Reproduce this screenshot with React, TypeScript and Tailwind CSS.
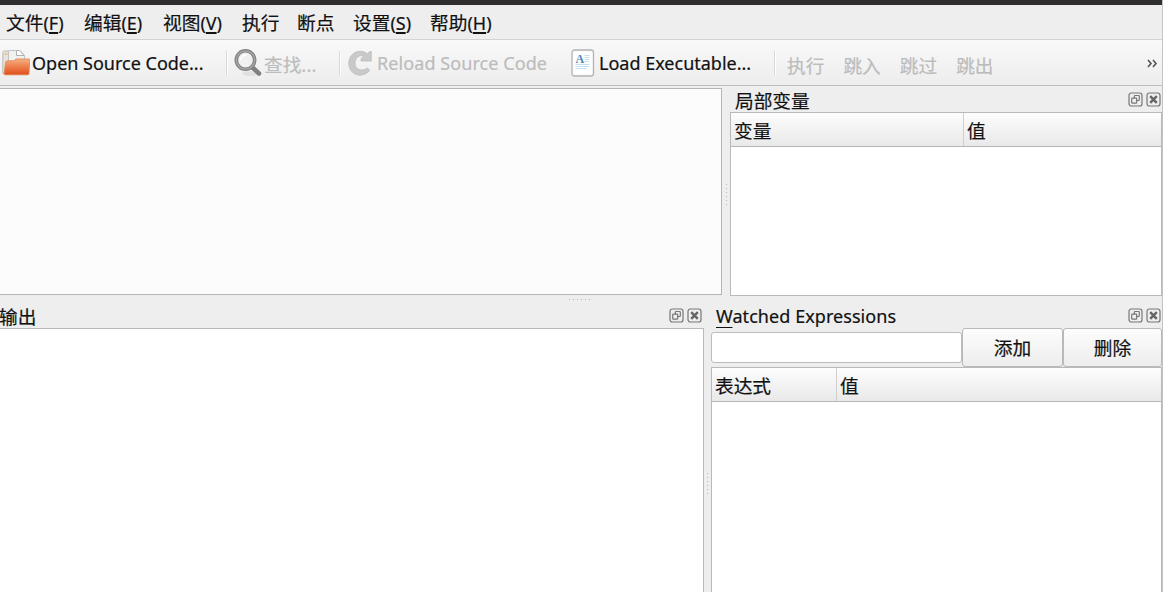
import React from 'react';

interface MenuEntry {
  label: string;
  shortcut?: string;
  width: string;
}

const menus: MenuEntry[] = [
  { label: '文件', shortcut: 'F', width: 'w-[78px]' },
  { label: '编辑', shortcut: 'E', width: 'w-[79px]' },
  { label: '视图', shortcut: 'V', width: 'w-[79px]' },
  { label: '执行', width: 'w-[55px]' },
  { label: '断点', width: 'w-[56px]' },
  { label: '设置', shortcut: 'S', width: 'w-[77px]' },
  { label: '帮助', shortcut: 'H', width: 'w-[78px]' },
];

const steps = ['执行', '跳入', '跳过', '跳出'];

const FolderIcon = () => (
  <svg width="28" height="28" viewBox="0 0 28 28" className="shrink-0">
    <defs>
      <linearGradient id="folder" x1="0" y1="0" x2="0" y2="1">
        <stop offset="0" stopColor="#f5b184" />
        <stop offset="0.45" stopColor="#ef8250" />
        <stop offset="1" stopColor="#e04d1c" />
      </linearGradient>
    </defs>
    <path d="M.8 24.500V3.500Q.8 2 2.300 2H6l1.500 2V24z" fill="#e6e3df" stroke="#bdbab6" />
    <path d="M6.500 1.500h11.500l4.500 5V16h-16z" fill="#f1f1f0" stroke="#c3c3c2" />
    <path d="M14.500 1.500V6.500h7.500L17.500 1.500z" fill="#fff" stroke="#b0b0b0" />
    <path d="M2.500 5h3" stroke="#e8a94f" />
    <path d="M3.500 14Q3.500 11.800 5.500 11.800h6.500l2-1.800h13q.8 0 .8 1l-.8 13.500q0 1.300-1.500 1.300H3q-1 0-.8-1.300z" fill="url(#folder)" stroke="#e0824f" strokeWidth="0.800" />
  </svg>
);

const FindIcon = () => (
  <svg width="30" height="30" viewBox="0 0 30 30" className="shrink-0">
    <ellipse cx="17" cy="25.500" rx="9" ry="2.300" fill="#e0e0e0" />
    <path d="M18.500 19.500l6.500 6" stroke="#808080" strokeWidth="4.500" strokeLinecap="round" />
    <circle cx="11.500" cy="12" r="9.200" fill="#f0f0f0" stroke="#828282" strokeWidth="3.600" />
    <circle cx="11.500" cy="12" r="9.200" fill="none" stroke="#aaa" strokeWidth="1.200" />
    <path d="M6.500 12q1-5 6-5" fill="none" stroke="#fff" strokeWidth="1.500" />
  </svg>
);

const ReloadIcon = () => (
  <svg width="26" height="28" viewBox="0 0 26 28" className="shrink-0">
    <path
      d="M23.300 2.500v9.500H13v-2.500l3-2.500C11.500 5.500 7 8.500 7 14.200c0 6.500 7 8.800 12.500 4.800l2.300 2.500C13.500 30.500.8 25.500.8 14.300.8 4 11.500-1 19.500 4.800l2.300-2.300z"
      fill="#c9c9c9"
      stroke="#bcbcbc"
      strokeWidth="0.800"
      strokeLinejoin="round"
    />
  </svg>
);

const ExecutableIcon = () => (
  <svg width="24" height="28" viewBox="0 0 24 28" className="shrink-0">
    <rect x="1" y="1" width="21.500" height="26" rx="2.500" fill="#fafafa" stroke="#b4b4b4" strokeWidth="1.300" />
    <rect x="3" y="3" width="17.500" height="22" fill="#fff" />
    <path d="M13.500 6.500h5M13.500 8.500h5M13.500 10.500h5M13.500 12.500h5M4.500 15.500h14M4.500 17.500h14M4.500 19.500h11" stroke="#c3dff0" strokeWidth="1.200" />
    <text x="4.500" y="13.500" fill="#4d87b5" fontFamily="Liberation Serif, serif" fontSize="12" fontWeight="bold">A</text>
  </svg>
);

const Separator = () => <div className="h-6 w-px shrink-0 bg-[#d8d8d8] shadow-[1px_0_0_#fff]" />;

const DockButtons = () => (
  <div className="flex shrink-0 gap-[3px]">
    <svg width="15" height="15" viewBox="0 0 15 15" fill="none" stroke="#777" strokeWidth="1.200">
      <rect x="1" y="1" width="13" height="13" rx="2.300" />
      <rect x="6.300" y="3.500" width="5" height="5" rx="0.800" />
      <rect x="3.700" y="6.200" width="5" height="5" rx="0.800" fill="#eee" />
    </svg>
    <svg width="15" height="15" viewBox="0 0 15 15" fill="none" stroke="#777" strokeWidth="1.200">
      <rect x="1" y="1" width="13" height="13" rx="2.300" />
      <path d="M4.200 4.200l6.600 6.600M10.800 4.200l-6.600 6.600" stroke="#666" strokeWidth="2.500" />
    </svg>
  </div>
);

const Grip = ({ horizontal = false }: { horizontal?: boolean }) => (
  <div className={`flex justify-between ${horizontal ? 'h-px w-[21px]' : 'h-[21px] w-px flex-col'}`}>
    {[0, 1, 2, 3, 4, 5].map((dot) => (
      <span key={dot} className="h-px w-px bg-[#b8b8b8]" />
    ))}
  </div>
);

interface VariableTableProps {
  columns: [string, string];
  firstWidth: string;
}

const VariableTable: React.FC<VariableTableProps> = ({ columns, firstWidth }) => (
  <div className="flex min-h-0 flex-1 flex-col border border-[#b9b9b9] bg-white">
    <div className="flex h-[34px] shrink-0 border-b border-[#b5b5b5] bg-gradient-to-b from-[#fdfdfd] to-[#e9e9e9] leading-[35px]">
      <div className={`shrink-0 border-r border-[#cfcfcf] pl-[3px] ${firstWidth}`}>{columns[0]}</div>
      <div className="pl-[3px]">{columns[1]}</div>
    </div>
  </div>
);

export default function App() {
  return (
    <div className="h-[592px] w-[1172px] overflow-hidden bg-white font-['Noto_Sans','Noto_Sans_CJK_SC',sans-serif] text-[18.700px] leading-6 whitespace-nowrap text-[#111] [-webkit-text-stroke:0.2px]">
      <div className="flex h-full w-[1163px] flex-col border-r border-[#c4c4c4] bg-[#eee]">
        <div className="h-[5px] shrink-0 bg-[#302d2e]" />

        {/* Menu bar */}
        <div className="flex h-[35px] shrink-0 items-center border-b border-[#d3d3d3] pt-px pl-[6px]">
          {menus.map((menu) => (
            <div key={menu.label} className={`shrink-0 ${menu.width}`}>
              {menu.label}
              {menu.shortcut && (
                <span className="text-[18px]">
                  (<span className="underline decoration-2 underline-offset-2">{menu.shortcut}</span>)
                </span>
              )}
            </div>
          ))}
        </div>

        {/* Toolbar */}
        <div className="flex h-[46px] shrink-0 items-center border-b border-[#bdbdbd] bg-gradient-to-b from-[#f9f9f9] to-[#ededed] pl-[2px]">
          <FolderIcon />
          <span className="ml-[2px] w-[194px] shrink-0 text-[18px]">Open Source Code...</span>
          <Separator />
          <div className="ml-[7px] flex w-[105px] shrink-0 items-center">
            <FindIcon />
            <span className="pt-[5px] text-[#bcbcbc]">查找...</span>
          </div>
          <Separator />
          <div className="ml-[8px] flex w-[223px] shrink-0 items-center">
            <ReloadIcon />
            <span className="ml-[3px] text-[18px] tracking-[0.080px] text-[#bcbcbc]">Reload Source Code</span>
          </div>
          <div className="flex w-[203px] shrink-0 items-center">
            <ExecutableIcon />
            <span className="ml-[4px] text-[18px]">Load Executable...</span>
          </div>
          <Separator />
          <div className="ml-[12px] flex gap-[19px] pt-[6px] text-[#bcbcbc]">
            {steps.map((step) => (
              <span key={step}>{step}</span>
            ))}
          </div>
          <svg width="11" height="9" viewBox="0 0 11 9" className="mt-px mr-[4px] ml-auto" fill="none" stroke="#555" strokeWidth="1.600">
            <path d="M1 1l3 3.500L1 8M6 1l3 3.500L6 8" />
          </svg>
        </div>

        {/* Source view and local variables */}
        <div className="flex h-[210px] shrink-0">
          <div className="mt-[2px] h-[207px] w-[722px] shrink-0 border border-l-0 border-[#b5b5b5] bg-[#fcfcfc]" />
          <div className="flex w-2 shrink-0 items-center justify-center pt-[6px]">
            <Grip />
          </div>
          <div className="flex min-w-0 flex-1 flex-col">
            <div className="flex h-[26px] shrink-0 items-center justify-between pt-px pr-px pl-[5px]">
              <span className="pt-[2px]">局部变量</span>
              <DockButtons />
            </div>
            <VariableTable columns={['变量', '值']} firstWidth="w-[233px]" />
          </div>
        </div>

        <div className="flex h-[7px] shrink-0 pt-[3px] pl-[569px]">
          <Grip horizontal />
        </div>

        {/* Output and watched expressions */}
        <div className="flex min-h-0 flex-1">
          <div className="flex w-[704px] shrink-0 flex-col">
            <div className="flex h-[25px] shrink-0 items-center justify-between pr-[2px]">
              <span className="-ml-px pt-[3px]">输出</span>
              <DockButtons />
            </div>
            <div className="flex-1 border-t border-r border-[#b9b9b9] bg-white" />
          </div>
          <div className="flex w-[7px] shrink-0 justify-center pt-[170px]">
            <Grip />
          </div>
          <div className="-mb-px flex min-w-0 flex-1 flex-col">
            <div className="flex h-[25px] shrink-0 items-center justify-between pr-px pl-[5px]">
              <span className="text-[18px] tracking-[0.060px]">
                <span className="underline decoration-1 underline-offset-4">W</span>atched Expressions
              </span>
              <DockButtons />
            </div>
            <div className="flex h-[39px] shrink-0 items-start">
              <input className="mt-[4px] h-[31px] w-[251px] shrink-0 rounded-[3px] border border-[#bcbcbc] bg-white px-2 outline-none" />
              <button className="h-[39px] w-[101px] shrink-0 rounded-[3px] border border-[#b9b9b9] bg-gradient-to-b from-[#fdfdfd] to-[#ededed]">添加</button>
              <button className="h-[39px] min-w-0 flex-1 rounded-[3px] border border-[#b9b9b9] bg-gradient-to-b from-[#fdfdfd] to-[#ededed]">删除</button>
            </div>
            <VariableTable columns={['表达式', '值']} firstWidth="w-[125px]" />
          </div>
        </div>
      </div>
    </div>
  );
}
